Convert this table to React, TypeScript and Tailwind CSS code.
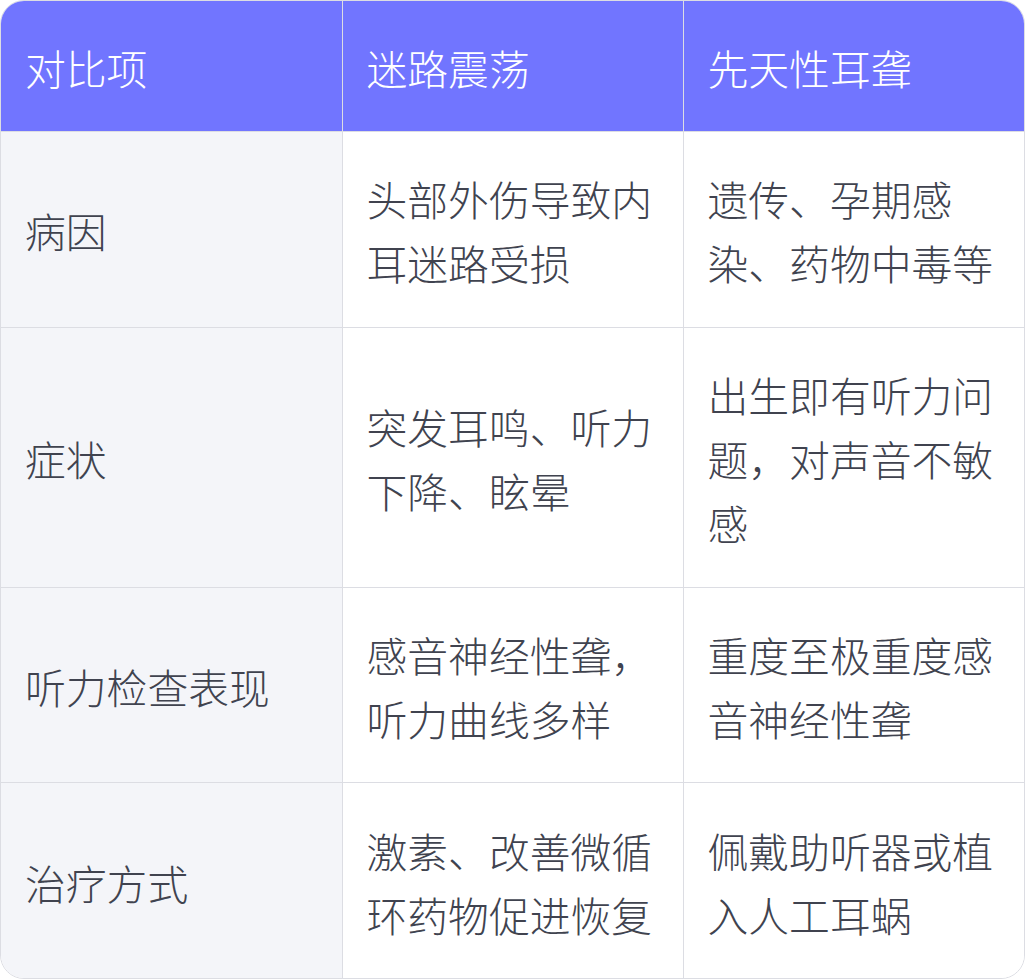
const rows = [
  { item: '病因', a: '头部外伤导致内耳迷路受损', b: '遗传、孕期感染、药物中毒等' },
  { item: '症状', a: '突发耳鸣、听力下降、眩晕', b: '出生即有听力问题，对声音不敏感' },
  { item: '听力检查表现', a: '感音神经性聋，听力曲线多样', b: '重度至极重度感音神经性聋' },
  { item: '治疗方式', a: '激素、改善微循环药物促进恢复', b: '佩戴助听器或植入人工耳蜗' },
];

export default function App() {
  return (
    <div className="w-[1025px] bg-white font-['Noto_Sans_CJK_SC',sans-serif] font-light">
      <div className="w-[1025px] overflow-hidden rounded-[24px] border border-[#dcdde3]">
        <table className="w-full table-fixed border-collapse text-[40.8px] leading-[64px]">
          <colgroup>
            <col className="w-[341px]" />
            <col className="w-[341px]" />
            <col />
          </colgroup>
          <thead>
            <tr className="bg-[#7175ff] text-white">
              <th className="px-[24px] pt-[35px] pb-[31px] text-left font-light">对比项</th>
              <th className="border-l border-[#dcdde3] px-[24px] pt-[35px] pb-[31px] text-left font-light">迷路震荡</th>
              <th className="border-l border-[#dcdde3] px-[24px] pt-[35px] pb-[31px] text-left font-light">先天性耳聋</th>
            </tr>
          </thead>
          <tbody className="text-[#40434f]">
            {rows.map((r) => (
              <tr key={r.item} className="border-t border-[#dcdde3]">
                <td className="bg-[#f4f5f9] px-[24px] pt-[35.4px] pb-[31.4px] align-middle">{r.item}</td>
                <td className="border-l border-[#dcdde3] bg-white px-[24px] pt-[35.4px] pb-[31.4px] align-middle">{r.a}</td>
                <td className="border-l border-[#dcdde3] bg-white px-[24px] pt-[35.4px] pb-[31.4px] align-middle">{r.b}</td>
              </tr>
            ))}
          </tbody>
        </table>
      </div>
    </div>
  );
}
